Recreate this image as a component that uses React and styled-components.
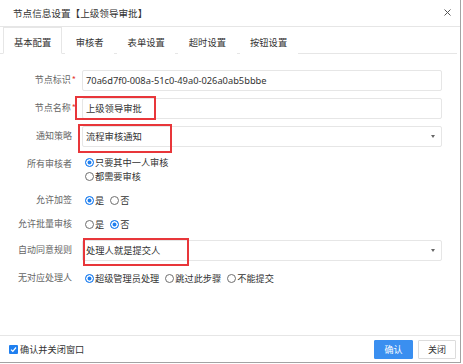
import React from "react";
import styled, { createGlobalStyle } from "styled-components";

const GlobalStyle = createGlobalStyle`
  html, body { margin: 0; padding: 0; background: #fff; }
  body { font-family: "Noto Sans", "Noto Sans CJK SC", sans-serif; color: #333; }
  * { box-sizing: border-box; }
`;

const Dialog = styled.div`
  width: 461px;
  height: 363px;
  background: #fff;
  border-right: 1px solid #a3a3a3;
  border-bottom: 1px solid #a3a3a3;
  display: flex;
  flex-direction: column;
`;

const TitleBar = styled.div`
  height: 27px;
  border-bottom: 1px solid #e6e6e6;
  display: flex;
  align-items: center;
  justify-content: space-between;
  padding: 0 9px 1px 13px;
`;

const Title = styled.span`
  font-family: "Noto Sans CJK SC", sans-serif;
  font-size: 9.6px;
  color: #333;
`;

const CloseBtn = styled.svg`
  width: 7px;
  height: 7px;
`;

const TabBar = styled.div`
  display: flex;
  align-items: flex-end;
  gap: 3px;
  height: 27px;
  margin: 0 3px 0 0;
  padding-left: 3px;
  border-bottom: 1px solid #e6e6e6;
`;

const Tab = styled.div`
  height: 27px;
  padding: 3px ${(p) => (p.$active ? "10px" : "9.5px")} 0;
  margin-bottom: -1px;
  display: flex;
  align-items: center;
  font-family: "Noto Sans CJK SC", sans-serif;
  font-size: 9.3px;
  color: #333;
  border: 1px solid ${(p) => (p.$active ? "#e6e6e6" : "transparent")};
  border-bottom: 1px solid ${(p) => (p.$active ? "#fff" : "transparent")};
  background: #fff;
`;

const Form = styled.div`
  padding-top: 12px;
  display: flex;
  flex-direction: column;
`;

const Row = styled.div`
  display: grid;
  grid-template-columns: 82px 360px;
  align-items: ${(p) => (p.$top ? "start" : "center")};
  padding: ${(p) => (p.$radio ? "5px 0" : "3.5px 0")};
  margin-top: ${(p) => (p.$spaced ? "2px" : "0")};
`;

const Label = styled.div`
  text-align: right;
  padding-right: ${(p) => (p.$required ? "6px" : "10px")};
  padding-top: ${(p) => (p.$top ? "2px" : "0")};
  font-family: "Noto Sans CJK SC", sans-serif;
  font-size: 9px;
  line-height: 14px;
  color: #666;
  white-space: nowrap;
`;

const Star = styled.span`
  color: #e53935;
  margin-left: 1px;
`;

const Field = styled.div`
  position: relative;
`;

const Input = styled.div`
  height: 21px;
  border: 1px solid #e6e6e6;
  border-radius: 2px;
  padding: 0 3px;
  display: flex;
  align-items: center;
  justify-content: space-between;
  font-size: 9.3px;
  color: #333;
  background: #fff;
`;

const Arrow = styled.span`
  width: 0;
  height: 0;
  border-left: 2.5px solid transparent;
  border-right: 2.5px solid transparent;
  border-top: 3px solid #666;
  margin-right: 3px;
`;

const Highlight = styled.div`
  position: absolute;
  border: 2px solid #e8363a;
  pointer-events: none;
`;

const RadioGroup = styled.div`
  display: flex;
  flex-direction: ${(p) => (p.$column ? "column" : "row")};
  align-items: flex-start;
  padding-left: 3px;
`;

const Option = styled.span`
  display: inline-flex;
  align-items: center;
  gap: 1px;
  margin-right: 6px;
  height: 14px;
  font-family: "Noto Sans CJK SC", sans-serif;
  font-size: 9.2px;
  color: #333;
  white-space: nowrap;
`;

const Circle = styled.span`
  width: 9px;
  height: 9px;
  border-radius: 50%;
  border: 1px solid ${(p) => (p.$on ? "#1f7fef" : "#6f6f6f")};
  background: ${(p) => (p.$on ? "#1f7fef" : "#fff")};
  box-shadow: ${(p) => (p.$on ? "inset 0 0 0 1.5px #fff" : "none")};
  flex: none;
`;

const Footer = styled.div`
  margin-top: auto;
  height: 27px;
  border-top: 1px solid #e6e6e6;
  display: flex;
  align-items: center;
  justify-content: space-between;
  padding: 0 4px 0 9px;
`;

const CheckLabel = styled.span`
  display: inline-flex;
  align-items: center;
  gap: 2px;
  font-family: "Noto Sans CJK SC", sans-serif;
  font-size: 9.2px;
  color: #333;
`;

const CheckBox = styled.span`
  width: 9px;
  height: 9px;
  border-radius: 1px;
  background: #1f7fef;
  display: inline-flex;
  align-items: center;
  justify-content: center;
`;

const Buttons = styled.div`
  display: flex;
  gap: 5px;
`;

const Button = styled.div`
  width: ${(p) => (p.$primary ? "39px" : "38px")};
  height: 19px;
  display: flex;
  align-items: center;
  justify-content: center;
  font-family: "Noto Sans CJK SC", sans-serif;
  font-size: 9px;
  border-radius: 1px;
  color: ${(p) => (p.$primary ? "#fff" : "#333")};
  background: ${(p) => (p.$primary ? "#3a8ff0" : "#fff")};
  border: 1px solid ${(p) => (p.$primary ? "#3a8ff0" : "#dcdcdc")};
`;

const Radio = ({ on, children }) => (
  <Option>
    <Circle $on={on} />
    {children}
  </Option>
);

export default function App() {
  return (
    <>
      <GlobalStyle />
      <Dialog>
        <TitleBar>
          <Title>节点信息设置【上级领导审批】</Title>
          <CloseBtn viewBox="0 0 7 7">
            <path d="M0.5 0.5 L6.5 6.5 M6.5 0.5 L0.5 6.5" stroke="#555" strokeWidth="1" />
          </CloseBtn>
        </TitleBar>
        <TabBar>
          <Tab $active>基本配置</Tab>
          <Tab>审核者</Tab>
          <Tab>表单设置</Tab>
          <Tab>超时设置</Tab>
          <Tab>按钮设置</Tab>
        </TabBar>
        <Form>
          <Row>
            <Label $required>
              节点标识<Star>*</Star>
            </Label>
            <Field>
              <Input>70a6d7f0-008a-51c0-49a0-026a0ab5bbbe</Input>
            </Field>
          </Row>
          <Row>
            <Label $required>
              节点名称<Star>*</Star>
            </Label>
            <Field>
              <Input>上级领导审批</Input>
              <Highlight style={{ left: -7, top: -2, width: 81, height: 24 }} />
            </Field>
          </Row>
          <Row>
            <Label>通知策略</Label>
            <Field>
              <Input>
                流程审核通知
                <Arrow />
              </Input>
              <Highlight style={{ left: -4, top: -2, width: 94, height: 29 }} />
            </Field>
          </Row>
          <Row $radio $top>
            <Label $top>所有审核者</Label>
            <RadioGroup $column>
              <Radio on>只要其中一人审核</Radio>
              <Radio>都需要审核</Radio>
            </RadioGroup>
          </Row>
          <Row $radio>
            <Label>允许加签</Label>
            <RadioGroup>
              <Radio on>是</Radio>
              <Radio>否</Radio>
            </RadioGroup>
          </Row>
          <Row $radio>
            <Label>允许批量审核</Label>
            <RadioGroup>
              <Radio>是</Radio>
              <Radio on>否</Radio>
            </RadioGroup>
          </Row>
          <Row>
            <Label>自动同意规则</Label>
            <Field>
              <Input>
                处理人就是提交人
                <Arrow />
              </Input>
              <Highlight style={{ left: 1, top: -2, width: 106, height: 28 }} />
            </Field>
          </Row>
          <Row $radio $spaced>
            <Label>无对应处理人</Label>
            <RadioGroup>
              <Radio on>超级管理员处理</Radio>
              <Radio>跳过此步骤</Radio>
              <Radio>不能提交</Radio>
            </RadioGroup>
          </Row>
        </Form>
        <Footer>
          <CheckLabel>
            <CheckBox>
              <svg width="7" height="7" viewBox="0 0 7 7">
                <path d="M1 3.6 L2.8 5.3 L6 1.5" fill="none" stroke="#fff" strokeWidth="1.2" />
              </svg>
            </CheckBox>
            确认并关闭窗口
          </CheckLabel>
          <Buttons>
            <Button $primary>确认</Button>
            <Button>关闭</Button>
          </Buttons>
        </Footer>
      </Dialog>
    </>
  );
}
